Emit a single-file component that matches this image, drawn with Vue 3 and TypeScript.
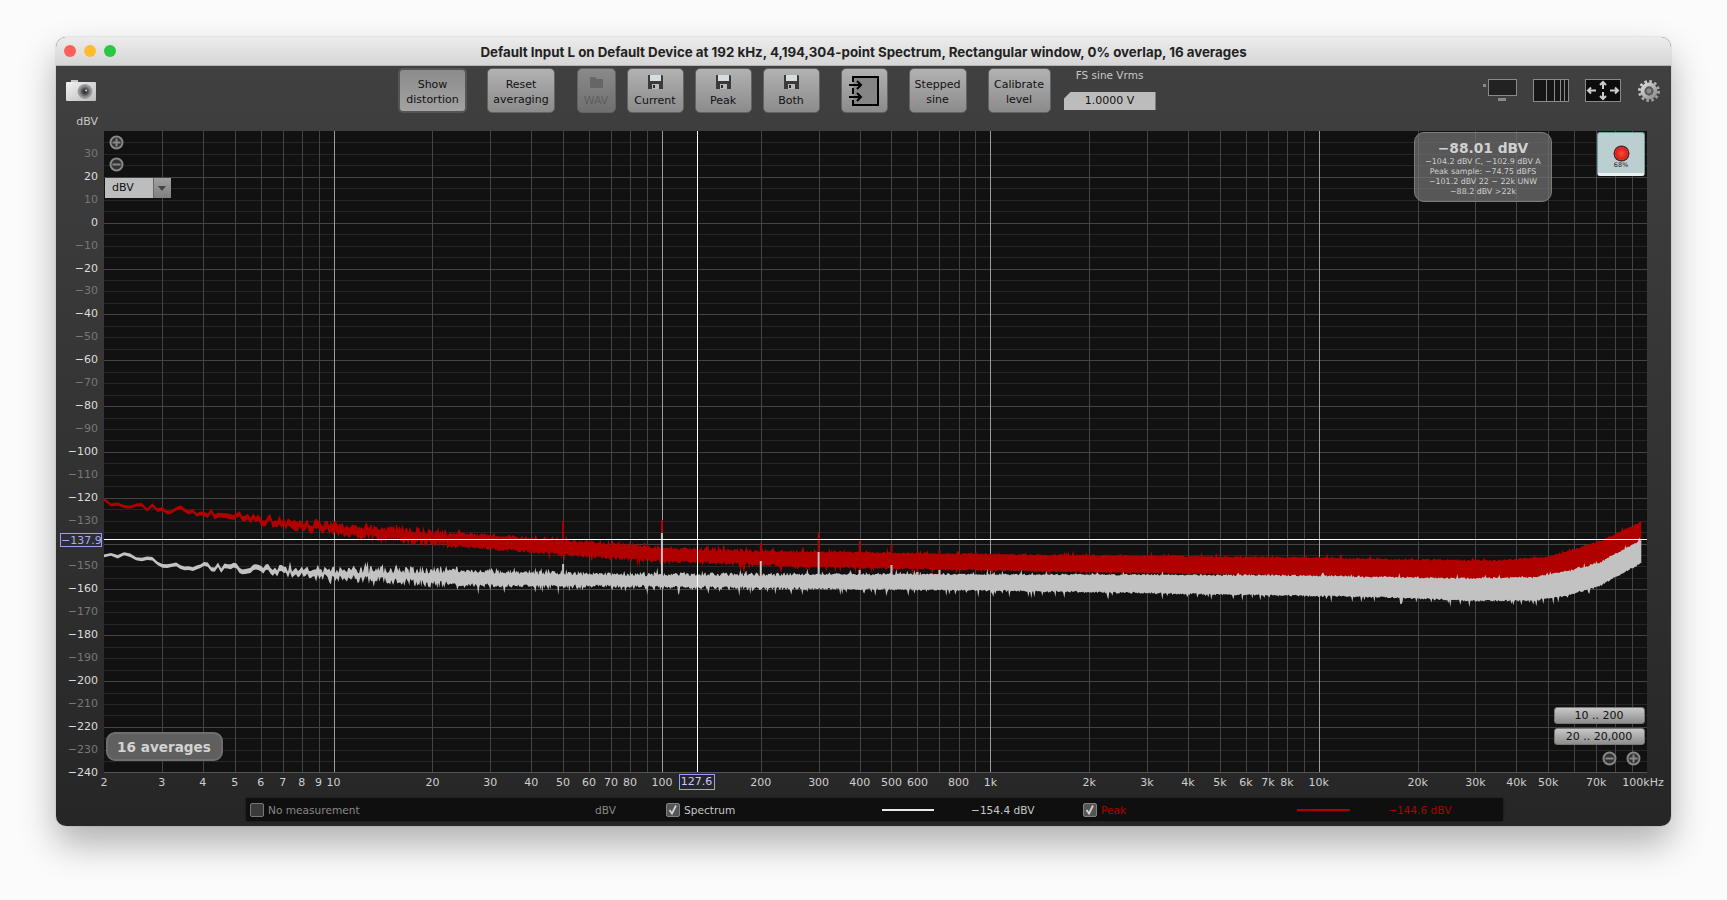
<script setup lang="ts">
// plot scale, in px of the plot box (1543 x 641)
const PX_PER_DB = 2.292
const PX_PER_DECADE = 328.4
const PLOT_LEFT = 104
const PLOT_TOP = 131

const yOf = (db: number) => (40 - db) * PX_PER_DB
const xOf = (f: number) => Math.log10(f / 2) * PX_PER_DECADE
const minus = (n: number | string) => String(n).replace('-', '\u2212')

// -140 sits under the cursor readout, so it gets no label of its own
const yTicks: { db: number; label: string; major: boolean }[] = []
for (let db = 30; db >= -240; db -= 10) {
  if (db !== -140) yTicks.push({ db, label: minus(db), major: db % 20 === 0 })
}

const hLines: { y: number; major: boolean }[] = []
for (let db = 35; db >= -235; db -= 5) {
  hLines.push({ y: Math.round(yOf(db)) + 0.5, major: db % 20 === 0 })
}

const vLines: { x: number; decade: boolean }[] = []
for (let dec = 1; dec <= 10000; dec *= 10) {
  for (let m = 1; m <= 9; m++) {
    const f = dec * m
    if (f < 3 || f >= 100000) continue
    vLines.push({ x: Math.round(xOf(f)) + 0.5, decade: m === 1 })
  }
}

const xLabels = [
  2, 3, 4, 5, 6, 7, 8, 9, 10, 20, 30, 40, 50, 60, 70, 80, 100, 200, 300, 400, 500, 600, 800,
  1000, 2000, 3000, 4000, 5000, 6000, 7000, 8000, 10000, 20000, 30000, 40000, 50000, 70000,
].map((f) => ({ x: xOf(f), text: f >= 1000 ? `${f / 1000}k` : String(f) }))

// small seeded generator so the noise stays the same on every load
function rng(seed: number) {
  return () => {
    seed = (seed + 0x6d2b79f5) | 0
    let t = Math.imul(seed ^ (seed >>> 15), 1 | seed)
    t = (t + Math.imul(t ^ (t >>> 7), 61 | t)) ^ t
    return ((t ^ (t >>> 14)) >>> 0) / 4294967296
  }
}

type Anchor = [number, number, number]

function interp(a: Anchor[], x: number): [number, number] {
  for (let i = 1; i < a.length; i++) {
    if (x <= a[i][0]) {
      const k = (x - a[i - 1][0]) / (a[i][0] - a[i - 1][0])
      return [a[i - 1][1] + (a[i][1] - a[i - 1][1]) * k, a[i - 1][2] + (a[i][2] - a[i - 1][2]) * k]
    }
  }
  const last = a[a.length - 1]
  return [last[1], last[2]]
}

// anchors are [page x, page y of upper edge, page y of lower edge]
function bandPath(a: Anchor[], seed: number, downSpikes: number) {
  const r = rng(seed)
  const top: string[] = []
  const bottom: string[] = []
  let x = 104
  while (x <= 1642) {
    const [t, b] = interp(a, x)
    const wobble = (r() - 0.5) * (x < 450 ? 7.5 : x < 800 ? 3.5 : 1.2)
    const noise = x < 330 ? 0.4 : 1.4
    let up = t + wobble - r() * noise
    let down = b + wobble + r() * noise
    if (x > 260 && r() < (x < 1000 ? 0.1 : 0.05)) up -= 1 + r() * 3.5
    if (x > 260 && r() < downSpikes) down += 1 + r() * 6
    top.push(`${(x - PLOT_LEFT).toFixed(1)},${(up - PLOT_TOP).toFixed(1)}`)
    bottom.unshift(`${(x - PLOT_LEFT).toFixed(1)},${(down - PLOT_TOP).toFixed(1)}`)
    x += Math.max(1, 7 * Math.exp(-(x - 104) / 150))
  }
  return `M${top.join('L')}L${bottom.join('L')}Z`
}

const redPath = bandPath(
  [
    [104, 501.5, 504], [200, 510.5, 514], [333, 525, 533], [450, 533, 545], [550, 540, 553],
    [610, 545, 558], [700, 550, 562], [800, 552, 566], [1000, 555, 570], [1300, 558, 575],
    [1400, 560, 578], [1500, 561, 579], [1550, 557, 577], [1600, 542, 565], [1642, 522, 542],
  ],
  7,
  0.06,
)

const whitePath = bandPath(
  [
    [104, 557.5, 560], [110, 554.5, 557], [200, 565.5, 569], [333, 570, 577], [450, 571, 584],
    [550, 574, 586], [610, 575, 586], [1000, 575, 590], [1300, 576, 595], [1400, 578, 597],
    [1467, 579, 600], [1533, 578, 600], [1567, 572, 595], [1600, 563, 585], [1642, 540, 562],
  ],
  23,
  0.1,
)

// mains hum and its harmonics, tops given as page y
const redSpikes = [
  [50, 521], [100, 520], [200, 543], [300, 533], [400, 541], [500, 545], [600, 552], [700, 550],
].map(([f, y]) => ({ x: xOf(f) - 1, y: y - PLOT_TOP }))
const whiteSpikes = [
  [50, 564], [100, 533], [200, 561], [300, 552], [400, 570], [500, 565], [600, 572], [700, 570],
].map(([f, y]) => ({ x: xOf(f) - 1, y: y - PLOT_TOP }))

const cursorX = Math.round(xOf(127.6)) + 0.5
const cursorY = Math.round(yOf(-137.9)) + 0.5

const statLines = [
  '\u2212104.2 dBV C, \u2212102.9 dBV A',
  'Peak sample: \u221274.75 dBFS',
  '\u2212101.2 dBV 22 \u2212 22k UNW',
  '\u221288.2 dBV >22k',
]

const columnLines = [13, 21, 27, 31]
</script>

<template>
  <div class="page">
    <div class="window">
      <div class="titlebar">
        <span class="light red"></span>
        <span class="light amber"></span>
        <span class="light green"></span>
        <div class="title">Default Input L on Default Device at 192 kHz, 4,194,304-point Spectrum, Rectangular window, 0% overlap, 16 averages</div>
      </div>

      <div class="toolbar">
        <svg class="camera" width="30" height="21" viewBox="0 0 30 21">
          <defs>
            <linearGradient id="camBody" x1="0" y1="0" x2="1" y2="1">
              <stop offset="0" stop-color="#f2f2f2" />
              <stop offset="1" stop-color="#bcbcbc" />
            </linearGradient>
            <radialGradient id="camLens">
              <stop offset="0" stop-color="#22242c" />
              <stop offset="0.35" stop-color="#4a4a4e" />
              <stop offset="0.7" stop-color="#8a8a8a" />
              <stop offset="1" stop-color="#a8a8a8" />
            </radialGradient>
          </defs>
          <rect x="5" y="0" width="7" height="3" fill="#c8c8c8" />
          <rect x="0" y="2" width="30" height="19" rx="1" fill="url(#camBody)" />
          <circle cx="19" cy="11.5" r="7.5" fill="url(#camLens)" />
          <circle cx="20" cy="10.5" r="1" fill="#ddd" />
        </svg>

        <button class="tool pressed w-69 first">Show<br />distortion</button>
        <button class="tool w-68 reset">Reset<br />averaging</button>

        <button class="tool icon-tool disabled w-39 wav">
          <svg width="15" height="14" viewBox="0 0 15 14">
            <path d="M1 2h5l1.5 2H14v9H1z" fill="#666" />
          </svg>
          <span>WAV</span>
        </button>
        <button class="tool icon-tool w-57 near">
          <svg width="15" height="14" viewBox="0 0 15 14">
            <path d="M0 0h14l1 1v13H0z" fill="#3a3a3a" />
            <rect x="2" y="0" width="11" height="6" fill="#d4dde0" />
            <rect x="4" y="9" width="7" height="5" fill="#b8b8b8" />
            <rect x="5" y="10" width="2" height="3" fill="#2b2b2b" />
          </svg>
          <span>Current</span>
        </button>
        <button class="tool icon-tool w-57 near">
          <svg width="15" height="14" viewBox="0 0 15 14">
            <path d="M0 0h14l1 1v13H0z" fill="#3a3a3a" />
            <rect x="2" y="0" width="11" height="6" fill="#d4dde0" />
            <rect x="4" y="9" width="7" height="5" fill="#b8b8b8" />
            <rect x="5" y="10" width="2" height="3" fill="#2b2b2b" />
          </svg>
          <span>Peak</span>
        </button>
        <button class="tool icon-tool w-57 near">
          <svg width="15" height="14" viewBox="0 0 15 14">
            <path d="M0 0h14l1 1v13H0z" fill="#3a3a3a" />
            <rect x="2" y="0" width="11" height="6" fill="#d4dde0" />
            <rect x="4" y="9" width="7" height="5" fill="#b8b8b8" />
            <rect x="5" y="10" width="2" height="3" fill="#2b2b2b" />
          </svg>
          <span>Both</span>
        </button>

        <button class="tool w-47 group">
          <svg width="30" height="30" viewBox="0 0 30 30">
            <path d="M4 1h25v28H4" fill="#858585" />
            <path d="M4 6V1h25v28H4v-5M4 12v6" fill="none" stroke="#000" stroke-width="2" />
            <path d="M0 9h12M8 5l4 4-4 4M0 21h12M8 17l4 4-4 4" fill="none" stroke="#000" stroke-width="2" />
          </svg>
        </button>
        <button class="tool w-58 group">Stepped<br />sine</button>
        <button class="tool w-63 group">Calibrate<br />level</button>

        <div class="fs-level">
          <div class="fs-label">FS sine Vrms</div>
          <div class="fs-value">1.0000 V</div>
        </div>

        <svg class="view-icon display-icon" width="34" height="23" viewBox="0 0 34 23">
          <rect x="0" y="5" width="3" height="3" fill="#888" />
          <rect x="5.5" y="0.5" width="28" height="16" fill="#222" stroke="#8a8a8a" />
          <rect x="15" y="19" width="8" height="3" fill="#8a8a8a" />
        </svg>
        <svg class="view-icon columns-icon" width="36" height="23" viewBox="0 0 36 23">
          <rect x="0.5" y="0.5" width="35" height="22" fill="#161616" stroke="#8a8a8a" />
          <line v-for="c in columnLines" :key="c" :x1="c + 0.5" :x2="c + 0.5" y1="0" y2="23" stroke="#8a8a8a" />
        </svg>
        <svg class="view-icon arrows-icon" width="36" height="23" viewBox="0 0 36 23">
          <rect x="0.5" y="0.5" width="35" height="22" fill="#0c0c0c" stroke="#8a8a8a" />
          <g fill="none" stroke="#ccc" stroke-width="2">
            <path d="M18 3v7M15 6l3-3 3 3M18 13v7M15 17l3 3 3-3" />
            <path d="M3 11.5h8M6 8.5l-3 3 3 3M25 11.5h8M30 8.5l3 3-3 3" />
          </g>
        </svg>
        <svg class="view-icon gear-icon" width="22" height="22" viewBox="0 0 22 22">
          <defs>
            <linearGradient id="gearMetal" x1="0" y1="0" x2="1" y2="1">
              <stop offset="0" stop-color="#d8d8d8" />
              <stop offset="1" stop-color="#8e8e8e" />
            </linearGradient>
          </defs>
          <circle cx="11" cy="11" r="9.6" fill="none" stroke="url(#gearMetal)" stroke-width="2.8" stroke-dasharray="2.6 2.43" />
          <circle cx="11" cy="11" r="6.4" fill="none" stroke="url(#gearMetal)" stroke-width="4" />
          <circle cx="11" cy="11" r="4.4" fill="#5c5c5c" />
          <circle cx="11" cy="11" r="2.4" fill="#8c8c8c" />
        </svg>
      </div>

      <div class="chart-row">
        <div class="y-axis">
          <span class="y-unit">dBV</span>
          <span
            v-for="t in yTicks"
            :key="t.db"
            class="y-label"
            :class="{ major: t.major }"
            :style="{ top: yOf(t.db) - 1 + 'px' }"
          >{{ t.label }}</span>
          <span class="cursor-y" :style="{ top: cursorY + 'px' }">&minus;137.9</span>
        </div>

        <div class="plot">
          <svg class="plot-svg" width="1543" height="641" viewBox="0 0 1543 641">
            <g shape-rendering="crispEdges">
              <line
                v-for="h in hLines"
                :key="h.y"
                x1="0"
                x2="1543"
                :y1="h.y"
                :y2="h.y"
                :stroke="h.major ? '#444' : '#262626'"
              />
              <line
                v-for="v in vLines"
                :key="v.x"
                y1="0"
                y2="641"
                :x1="v.x"
                :x2="v.x"
                :stroke="v.decade ? '#9c9c9c' : '#444'"
              />
            </g>
            <path :d="redPath" fill="#b00000" />
            <rect v-for="s in redSpikes" :key="s.x" :x="s.x" :y="s.y" width="2" height="34" fill="#b00000" />
            <path :d="whitePath" fill="#c2c2c2" />
            <rect v-for="s in whiteSpikes" :key="s.x" :x="s.x" :y="s.y" width="2" :height="452 - s.y" fill="#c2c2c2" />
            <g shape-rendering="crispEdges" stroke="#fff">
              <line x1="0" x2="1543" :y1="cursorY" :y2="cursorY" />
              <line y1="0" y2="641" :x1="cursorX" :x2="cursorX" />
            </g>
          </svg>

          <svg class="zoom-btn y-plus" width="15" height="15" viewBox="0 0 15 15">
            <circle cx="7.5" cy="7.5" r="6" fill="#333" stroke="#888" stroke-width="2" />
            <path d="M3.5 7.5h8M7.5 3.5v8" stroke="#888" stroke-width="2" />
          </svg>
          <svg class="zoom-btn y-minus" width="15" height="15" viewBox="0 0 15 15">
            <circle cx="7.5" cy="7.5" r="6" fill="#333" stroke="#888" stroke-width="2" />
            <path d="M3.5 7.5h8" stroke="#888" stroke-width="2" />
          </svg>

          <div class="unit-select">
            <span class="unit-text">dBV</span>
            <span class="unit-arrow"></span>
          </div>

          <div class="stats">
            <div class="stats-main">&minus;88.01 dBV</div>
            <div v-for="line in statLines" :key="line" class="stats-line">{{ line }}</div>
          </div>

          <div class="meter">
            <span class="led"></span>
            <span class="meter-text">68%</span>
          </div>

          <div class="averages">16 averages</div>

          <button class="range range-a">10 .. 200</button>
          <button class="range range-b">20 .. 20,000</button>
          <svg class="zoom-btn x-minus" width="15" height="15" viewBox="0 0 15 15">
            <circle cx="7.5" cy="7.5" r="6" fill="#333" stroke="#888" stroke-width="2" />
            <path d="M3.5 7.5h8" stroke="#888" stroke-width="2" />
          </svg>
          <svg class="zoom-btn x-plus" width="15" height="15" viewBox="0 0 15 15">
            <circle cx="7.5" cy="7.5" r="6" fill="#333" stroke="#888" stroke-width="2" />
            <path d="M3.5 7.5h8M7.5 3.5v8" stroke="#888" stroke-width="2" />
          </svg>
        </div>
      </div>

      <div class="x-axis">
        <span v-for="l in xLabels" :key="l.text" class="x-label" :style="{ left: l.x + 'px' }">{{ l.text }}</span>
        <span class="x-label" style="left: 1539px">100kHz</span>
        <span class="cursor-x" :style="{ left: cursorX - 1 + 'px' }">127.6</span>
      </div>

      <div class="legend">
        <span class="check"></span>
        <span class="legend-text dim">No measurement</span>
        <span class="legend-text dim flush">dBV</span>
        <span class="check on"><svg width="12" height="12" viewBox="0 0 12 12"><path d="M2.5 6l2.5 3.5 4-8" fill="none" stroke="#d0d0d0" stroke-width="1.8" /></svg></span>
        <span class="legend-text">Spectrum</span>
        <span class="swatch white"></span>
        <span></span>
        <span class="legend-text flush">&minus;154.4 dBV</span>
        <span class="check on"><svg width="12" height="12" viewBox="0 0 12 12"><path d="M2.5 6l2.5 3.5 4-8" fill="none" stroke="#d0d0d0" stroke-width="1.8" /></svg></span>
        <span class="legend-text peak">Peak</span>
        <span class="swatch redline"></span>
        <span></span>
        <span class="legend-text peak flush">&minus;144.6 dBV</span>
      </div>
    </div>
  </div>
</template>

<style scoped>
.page {
  padding: 37px 56px 74px;
  background: #fbfbfb;
  font-family: "DejaVu Sans", sans-serif;
  font-size: 11px;
}

.window {
  width: 1615px;
  height: 789px;
  border-radius: 10px;
  overflow: hidden;
  background: linear-gradient(#404040, #404040 29px, #262626);
  box-shadow: 0 0 1px rgba(0, 0, 0, 0.5), 0 18px 36px rgba(0, 0, 0, 0.3);
}

/* title bar */
.titlebar {
  height: 29px;
  box-sizing: border-box;
  display: flex;
  align-items: center;
  padding-left: 8px;
  gap: 8px;
  background: linear-gradient(#ececec, #d6d6d6);
  border-bottom: 1px solid #b4b4b4;
  position: relative;
}

.light {
  width: 12px;
  height: 12px;
  border-radius: 50%;
}
.light.red { background: #ff5f57; }
.light.amber { background: #febc2e; }
.light.green { background: #28c840; }

.title {
  position: absolute;
  left: 0;
  right: 0;
  top: 7px;
  text-align: center;
  font-family: Inter, "Liberation Sans", sans-serif;
  font-size: 13.3px;
  line-height: 16px;
  font-weight: 700;
  color: #222;
}

/* toolbar */
.toolbar {
  height: 65px;
  box-sizing: border-box;
  display: flex;
  align-items: flex-start;
  padding: 2px 11px 0 10px;
}

.camera { margin-top: 12px; }

.tool {
  height: 45px;
  padding: 2px 0 0;
  box-sizing: border-box;
  background: linear-gradient(#b2b2b2, #8b8b8b);
  border: 1px solid #636363;
  border-radius: 5px;
  font-family: inherit;
  font-size: 11px;
  line-height: 15px;
  color: #111;
  text-align: center;
  display: block;
}

.tool svg { display: block; margin: 0 auto; }

.icon-tool svg { margin-bottom: 4px; }
.icon-tool span { display: block; }

.pressed {
  background: linear-gradient(#8c8c8c, #a2a2a2);
  border: 2px solid #555;
}

.disabled {
  background: linear-gradient(#8a8a8a, #6f6f6f);
  color: #5e5e5e;
}

.first { margin-left: 302px; }
.reset { margin-left: 20px; }
.wav { margin-left: 21.5px; }
.group { margin-left: 21px; }
.near { margin-left: 11px; }
.w-39 { width: 39px; }
.w-47 { width: 47px; padding-top: 0; }
.w-57 { width: 57px; }
.w-58 { width: 58px; }
.w-63 { width: 63px; }
.w-68 { width: 68px; }
.w-69 { width: 69px; }

.fs-level {
  margin-left: 13px;
  width: 92px;
  text-align: center;
}

.fs-label {
  height: 15px;
  line-height: 13px;
  padding-top: 1px;
  box-sizing: border-box;
  font-size: 10.5px;
  color: #c8c8c8;
}

.fs-value {
  margin-top: 9px;
  height: 18px;
  line-height: 18px;
  color: #111;
  background: #bcbcbc;
  clip-path: polygon(7px 0, 100% 0, 100% 100%, 0 100%, 0 7px);
}

.view-icon { margin-top: 11px; }
.display-icon { margin-left: auto; }
.columns-icon { margin-left: 16px; }
.arrows-icon { margin-left: 16px; }
.gear-icon { margin-left: 17px; margin-top: 12px; }

/* chart */
.chart-row {
  display: flex;
  height: 641px;
}

.y-axis {
  position: relative;
  width: 48px;
  flex: none;
}

.y-unit {
  position: absolute;
  right: 6px;
  top: -16px;
  color: #c8c8c8;
}

.y-label {
  position: absolute;
  right: 6px;
  transform: translateY(-50%);
  color: #777;
}
.y-label.major { color: #dcdcdc; }

.cursor-y {
  position: absolute;
  left: 4px;
  width: 42px;
  height: 14px;
  line-height: 13px;
  box-sizing: border-box;
  transform: translateY(-50%);
  border: 1px solid #9a9aff;
  background: #2e2e2e;
  color: #a9abff;
  text-align: center;
  font-size: 11px;
}

.plot {
  position: relative;
  width: 1543px;
  background: #111;
  flex: none;
}

.plot-svg { display: block; }

.zoom-btn { position: absolute; }
.y-plus { left: 4.5px; top: 4px; }
.y-minus { left: 4.5px; top: 26px; }
.x-minus { left: 1497.5px; top: 620px; }
.x-plus { left: 1522px; top: 620px; }

.unit-select {
  position: absolute;
  left: 1px;
  top: 47px;
  width: 66px;
  height: 20px;
  display: flex;
  background: #bdbdbd;
}

.unit-text {
  flex: 1;
  padding-left: 7px;
  line-height: 20px;
  color: #111;
}

.unit-arrow {
  width: 17px;
  border-left: 1px solid #666;
  background: linear-gradient(#a0a0a0, #808080);
  position: relative;
}

.unit-arrow::after {
  content: "";
  position: absolute;
  left: 4px;
  top: 8px;
  border: 4.5px solid transparent;
  border-top: 5px solid #444;
  border-bottom: 0;
}

.stats {
  position: absolute;
  left: 1310px;
  top: 1px;
  width: 138px;
  height: 70px;
  box-sizing: border-box;
  padding-top: 6px;
  border: 1px solid #7c7c7c;
  border-radius: 10px;
  background: rgba(115, 115, 115, 0.72);
  text-align: center;
  color: #d0d0d0;
}

.stats-main {
  font-size: 13.8px;
  font-weight: bold;
  line-height: 18px;
}

.stats-line {
  font-size: 7.9px;
  line-height: 10px;
}

.meter {
  position: absolute;
  left: 1493px;
  top: 1px;
  width: 48px;
  height: 44px;
  box-sizing: border-box;
  border: 1px solid #6f9c9c;
  border-bottom: 3px solid #e8f0f0;
  border-radius: 3px;
  background: #bccfd0;
  text-align: center;
}

.led {
  display: block;
  width: 13px;
  height: 13px;
  margin: 14px auto 0;
  border-radius: 50%;
  background: radial-gradient(#ff4a3a, #d81a10 70%);
  box-shadow: 0 0 0 1.5px #5a2222;
}

.meter-text {
  display: block;
  font-size: 6.5px;
  line-height: 8px;
  margin-top: 1px;
  color: #222;
}

.averages {
  position: absolute;
  left: 1.5px;
  top: 601px;
  width: 117px;
  height: 29px;
  box-sizing: border-box;
  border: 2px solid #6e6e6e;
  border-radius: 9px;
  background: #5f5f5f;
  color: #d2d2d2;
  font-size: 13.6px;
  font-weight: bold;
  line-height: 26px;
  text-align: center;
}

.range {
  position: absolute;
  left: 1449.5px;
  width: 91px;
  height: 17px;
  padding: 0;
  border: 1px solid #777;
  border-radius: 3px;
  background: linear-gradient(#c8c8c8, #8e8e8e);
  font-family: inherit;
  font-size: 11px;
  line-height: 15px;
  color: #111;
}
.range-a { top: 576px; }
.range-b { top: 597px; }

/* x axis labels */
.x-axis {
  position: relative;
  height: 26px;
  margin-left: 48px;
  border-top: 1px solid #555;
  box-sizing: border-box;
  width: 1543px;
}

.x-label {
  position: absolute;
  top: 2px;
  line-height: 15px;
  transform: translateX(-50%);
  color: #cfcfcf;
  white-space: nowrap;
}

.cursor-x {
  position: absolute;
  top: 1px;
  width: 36px;
  height: 16px;
  line-height: 14px;
  box-sizing: border-box;
  transform: translateX(-50%);
  border: 1px solid #9a9aff;
  color: #c9caff;
  background: #262626;
  text-align: center;
}

/* measurement legend */
.legend {
  margin-left: 190px;
  width: 1257px;
  height: 23px;
  box-sizing: border-box;
  padding-left: 4px;
  background: #0f0f0f;
  display: grid;
  grid-template-columns: 14px 331px 71px 14px 202px 52px 37px 112px 14px 200px 53px 38px 1fr;
  align-items: center;
  box-shadow: 0 0 2px rgba(0, 0, 0, 0.5);
}

.check {
  width: 14px;
  height: 14px;
  box-sizing: border-box;
  border: 1px solid #777;
  border-radius: 2px;
  background: #3a3a3a;
}
.check.on {
  background: #555;
  border-color: #808080;
}
.check svg { display: block; margin: 0 auto; }

.legend-text {
  padding-left: 4px;
  font-size: 10.6px;
  color: #c8c8c8;
  white-space: nowrap;
}
.legend-text.dim { color: #888; }
.legend-text.peak { color: #b00000; }
.legend-text.flush { padding-left: 0; }

.swatch { height: 2px; }
.swatch.white { background: #e8e8e8; }
.swatch.redline { background: #b00000; }
</style>

<style>
html, body { background: #fbfbfb; }
</style>
